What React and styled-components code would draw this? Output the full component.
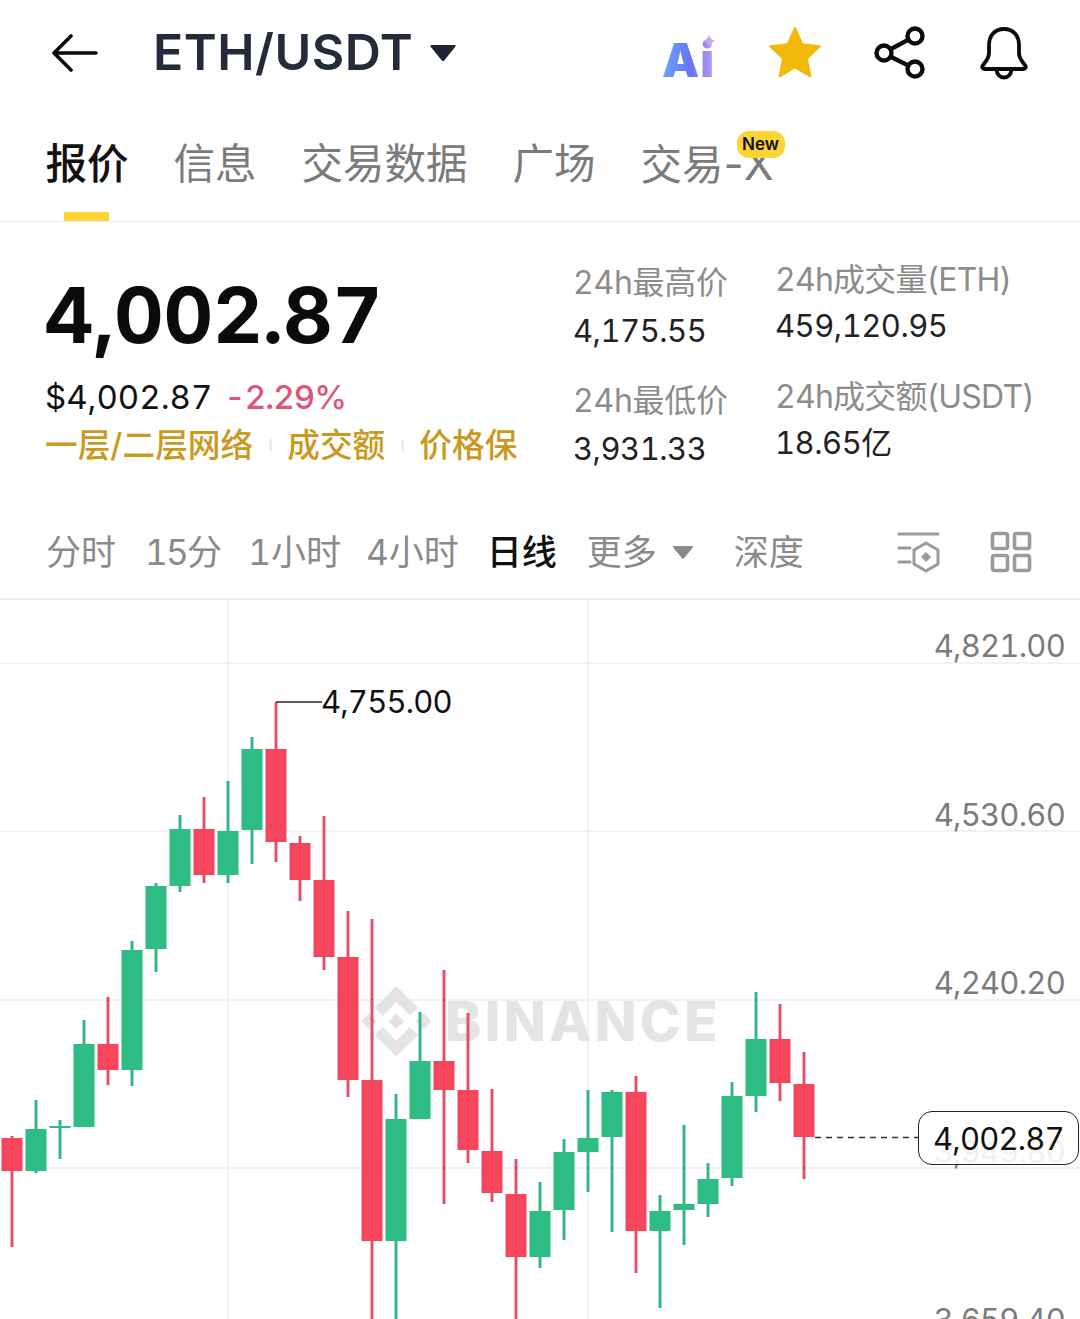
import React from "react";
import styled, { createGlobalStyle } from "styled-components";

const FONT = `Inter, "Noto Sans CJK SC", sans-serif`;

const GlobalStyle = createGlobalStyle`
  html, body {
    margin: 0;
    background: #fff;
  }
  body {
    font-family: ${FONT};
    font-variant-numeric: tabular-nums;
    overflow: hidden;
  }
`;

const RED = "#f6465d";
const GREEN = "#2ebd85";
const RED_WICK = "#e2506a";
const GREEN_WICK = "#3bb488";

// [type, body top, body bottom, wick high, wick low]
const CANDLES = [
  ["r", 1138, 1171, 1136, 1247],
  ["g", 1129, 1171, 1100, 1173],
  ["g", 1126, 1128, 1120, 1159],
  ["g", 1044, 1127, 1020, 1127],
  ["r", 1044, 1070, 997, 1085],
  ["g", 950, 1070, 941, 1086],
  ["g", 886, 949, 883, 972],
  ["g", 829, 886, 815, 892],
  ["r", 829, 875, 797, 883],
  ["g", 831, 875, 781, 883],
  ["g", 749, 830, 737, 864],
  ["r", 749, 842, 702, 862],
  ["r", 843, 880, 836, 901],
  ["r", 880, 957, 816, 970],
  ["r", 957, 1080, 911, 1097],
  ["r", 1080, 1241, 919, 1330],
  ["g", 1119, 1241, 1094, 1330],
  ["g", 1061, 1119, 1012, 1119],
  ["r", 1061, 1090, 970, 1204],
  ["r", 1090, 1150, 1013, 1163],
  ["r", 1151, 1193, 1089, 1202],
  ["r", 1194, 1257, 1159, 1330],
  ["g", 1211, 1257, 1182, 1268],
  ["g", 1152, 1210, 1139, 1240],
  ["g", 1138, 1152, 1090, 1192],
  ["g", 1092, 1137, 1090, 1232],
  ["r", 1092, 1231, 1076, 1273],
  ["g", 1211, 1231, 1195, 1308],
  ["g", 1204, 1210, 1125, 1245],
  ["g", 1179, 1204, 1163, 1217],
  ["g", 1096, 1178, 1082, 1186],
  ["g", 1039, 1096, 992, 1112],
  ["r", 1039, 1083, 1004, 1101],
  ["r", 1084, 1137, 1052, 1179],
];

const CHART_TOP = 600;
const AXIS = [
  { label: "4,821.00", y: 646 },
  { label: "4,530.60", y: 815 },
  { label: "4,240.20", y: 983 },
  { label: "3,949.80", y: 1152 },
  { label: "3,659.40", y: 1320 },
];

const Page = styled.div`
  width: 1080px;
  height: 1319px;
  background: #fff;
  overflow: hidden;
`;

const Header = styled.header`
  height: 106px;
  display: flex;
  align-items: center;
  padding: 0 50px 0 52px;
  box-sizing: border-box;
`;

const BackIcon = styled.svg`
  width: 46px;
  height: 40px;
  margin-right: 55px;
`;

const Title = styled.h1`
  margin: -3px 17px 0 0;
  font-size: 50px;
  line-height: 60px;
  font-weight: 600;
  color: #252b3b;
  letter-spacing: 0.5px;
`;

const Caret = styled.svg`
  width: ${(p) => p.$w}px;
  height: ${(p) => p.$h}px;
  margin-right: ${(p) => p.$mr || 0}px;
  display: block;
`;

const HeaderIcons = styled.div`
  margin-left: auto;
  display: flex;
  align-items: center;
  gap: 52px;
`;

const AiMark = styled.div`
  position: relative;
  width: 54px;
  height: 54px;
  display: flex;
  align-items: flex-end;
`;

const AiText = styled.span`
  font-size: 47px;
  line-height: 40px;
  font-weight: 900;
  letter-spacing: 1px;
  background: linear-gradient(90deg, #64a5f8 0%, #6b74f5 55%, #b79cf0 100%);
  -webkit-background-clip: text;
  background-clip: text;
  color: transparent;
`;

const Sparkle = styled.svg`
  position: absolute;
  right: 0;
  top: 8px;
  width: 14px;
  height: 14px;
`;

const Tabs = styled.nav`
  height: 116px;
  box-sizing: border-box;
  border-bottom: 1.5px solid #eeeeee;
  display: flex;
  gap: 45px;
  padding: 34px 0 0 45.5px;
`;

const Tab = styled.div`
  position: relative;
  height: 48px;
  font-size: 41.5px;
  line-height: 48px;
  font-weight: ${(p) => (p.$active ? 500 : 400)};
  color: ${(p) => (p.$active ? "#111" : "#7b7b7b")};

  ${(p) =>
    p.$active &&
    `&::after {
      content: "";
      position: absolute;
      left: 18.5px;
      bottom: -33px;
      width: 45px;
      height: 9px;
      background: #fcd535;
    }`}
`;

const XMark = styled.span`
  font-size: 44px;
  font-variant-numeric: normal;
`;

const NewBadge = styled.span`
  position: absolute;
  left: 96px;
  top: -9px;
  width: 48px;
  height: 27px;
  border-radius: 12px;
  background: #fcd535;
  color: #111;
  font-size: 17px;
  line-height: 27px;
  font-weight: 600;
  text-align: center;
`;

const Quote = styled.section`
  height: 288px;
  box-sizing: border-box;
  display: flex;
  padding-left: 46px;
`;

const QuoteMain = styled.div`
  width: 527px;
  padding-top: 48px;
`;

const LastPrice = styled.div`
  margin-left: -2px;
  font-size: 77px;
  line-height: 90px;
  font-weight: 700;
  letter-spacing: -0.25px;
  color: #0b0b0b;
`;

const SubRow = styled.div`
  margin-left: -1px;
  margin-top: 15px;
  display: flex;
  gap: 12px;
  font-size: 33px;
  line-height: 44px;
  font-weight: 400;
  color: #111;
`;

const Change = styled.span`
  letter-spacing: -0.9px;
  font-weight: 500;
  color: #dd5579;
`;

const TagRow = styled.div`
  margin-left: -1px;
  margin-top: 2px;
  display: flex;
  align-items: center;
  font-size: 32.7px;
  line-height: 48px;
  font-weight: 500;
  color: #c99a1e;
`;

const TagDivider = styled.i`
  display: block;
  width: 3px;
  height: 12px;
  margin: 0 15.5px;
  background: #eeeeee;
`;

const StatColumn = styled.div`
  width: ${(p) => p.$w}px;
  padding-top: ${(p) => p.$top}px;
  display: flex;
  flex-direction: column;
`;

const StatLabel = styled.div`
  height: 44px;
  font-size: 32px;
  line-height: 44px;
  letter-spacing: ${(p) => p.$spacing}px;
  color: #8c8c8c;
  white-space: nowrap;
`;

const StatValue = styled.div`
  height: 44px;
  margin-top: ${(p) => p.$gap}px;
  margin-bottom: ${(p) => p.$after}px;
  font-size: 31px;
  line-height: 44px;
  letter-spacing: -0.5px;
  color: #222;
  white-space: nowrap;
`;

const Toolbar = styled.div`
  height: 90px;
  box-sizing: border-box;
  border-bottom: 2px solid #f0f0f0;
  display: flex;
  align-items: center;
  padding: 0 48px 4px 46px;
  font-size: 35px;
`;

const Period = styled.span`
  margin-right: ${(p) => p.$mr}px;
  line-height: 44px;
  letter-spacing: ${(p) => p.$spacing || 0}px;
  font-weight: ${(p) => (p.$active ? 500 : 400)};
  color: ${(p) => (p.$active ? "#111" : "#8a8a8a")};
  white-space: nowrap;
`;

const ToolIcons = styled.div`
  margin-left: auto;
  display: flex;
  align-items: center;
  gap: 50px;
`;

const Chart = styled.div`
  position: relative;
  height: 719px;
  overflow: hidden;
`;

const ChartSvg = styled.svg`
  position: absolute;
  left: 0;
  top: 0;
  display: block;
`;

const AxisLabel = styled.span`
  position: absolute;
  right: 15px;
  top: ${(p) => p.$y - CHART_TOP - 22}px;
  font-size: 31px;
  line-height: 44px;
  letter-spacing: -0.75px;
  color: #7b7b7b;
`;

const HighLabel = styled.span`
  position: absolute;
  left: 321px;
  top: ${702 - CHART_TOP - 22}px;
  font-size: 31px;
  line-height: 44px;
  letter-spacing: -0.8px;
  color: #111;
`;

const LastPill = styled.div`
  position: absolute;
  left: 918px;
  top: ${1111 - CHART_TOP}px;
  width: 161px;
  height: 54px;
  box-sizing: border-box;
  border: 1.5px solid #222;
  border-radius: 14px;
  background: rgba(255, 255, 255, 0.88);
  font-size: 31px;
  line-height: 54px;
  letter-spacing: -0.8px;
  text-align: center;
  color: #111;
`;

const Watermark = styled.text`
  font-family: Inter, sans-serif;
  font-size: 55px;
  font-weight: 800;
  letter-spacing: 3.2px;
  fill: #e4e4e4;
`;

function Candle({ index, data }) {
  const [type, top, bottom, high, low] = data;
  const cx = 12 + index * 24;
  const y = (v) => v - CHART_TOP;
  return (
    <g>
      <rect
        x={cx - 1.5}
        y={y(high)}
        width="3"
        height={low - high}
        fill={type === "r" ? RED_WICK : GREEN_WICK}
      />
      <rect
        x={cx - 10.5}
        y={y(top)}
        width="21"
        height={bottom - top}
        fill={type === "r" ? RED : GREEN}
      />
    </g>
  );
}

function PriceChart() {
  return (
    <Chart>
      <ChartSvg width="1080" height="719" viewBox="0 0 1080 719">
        <g stroke="#eeeeee" strokeWidth="1.5">
          {[63, 231, 400, 568].map((y) => (
            <line key={y} x1="0" x2="1080" y1={y} y2={y} />
          ))}
          <line x1="228" x2="228" y1="0" y2="719" />
          <line x1="588" x2="588" y1="0" y2="719" />
        </g>
        <g transform="translate(361 386) scale(2.94)" fill="#e4e4e4">
          <path d="M16.624 13.9202l2.7175 2.7154-7.353 7.353-7.353-7.352 2.7175-2.7164 4.6355 4.6595 4.6356-4.6595zm4.6366-4.6366L24 12l-2.7154 2.7164L18.5682 12l2.6924-2.7164zm-9.272.001l2.7163 2.6914-2.7164 2.7174v-.001L9.2721 12l2.7164-2.7154zm-9.2722-.001L5.4088 12l-2.6914 2.6924L0 12l2.7164-2.7164zM11.9885.0115l7.353 7.329-2.7174 2.7154-4.6356-4.6356-4.6355 4.6595-2.7174-2.7154 7.353-7.353z" />
        </g>
        <Watermark x="445" y="441">BINANCE</Watermark>
        {CANDLES.map((c, i) => (
          <Candle key={i} index={i} data={c} />
        ))}
        <path d="M276 102H322" stroke="#222" strokeWidth="1.5" fill="none" />
        <path d="M815 537.5H918" stroke="#333" strokeWidth="1.5" strokeDasharray="6 5" fill="none" />
      </ChartSvg>
      {AXIS.map((a) => (
        <AxisLabel key={a.label} $y={a.y}>{a.label}</AxisLabel>
      ))}
      <HighLabel>4,755.00</HighLabel>
      <LastPill>4,002.87</LastPill>
    </Chart>
  );
}

export default function App() {
  return (
    <Page>
      <GlobalStyle />
      <Header>
        <BackIcon viewBox="0 0 46 40">
          <path d="M2 20H44M19 3L2 20L19 37" fill="none" stroke="#0b0b0b" strokeWidth="3.6" strokeLinecap="round" strokeLinejoin="round" />
        </BackIcon>
        <Title>ETH/USDT</Title>
        <Caret $w={26} $h={18} viewBox="0 0 26 18">
          <path d="M1.5 1H24.5C25.6 1 26 2 25.3 2.8L14.2 16.4C13.5 17.2 12.5 17.2 11.8 16.4L.7 2.8C0 2 .4 1 1.5 1Z" fill="#1e2433" />
        </Caret>
        <HeaderIcons>
          <AiMark>
            <AiText>Ai</AiText>
            <Sparkle viewBox="0 0 14 14">
              <path d="M7 0C7.6 4 9.5 6.2 14 7C9.5 7.8 7.6 10 7 14C6.4 10 4.5 7.8 0 7C4.5 6.2 6.4 4 7 0Z" fill="#c3a6e8" />
            </Sparkle>
          </AiMark>
          <svg width="54" height="54" viewBox="0 0 52 52">
            <path d="M26 2L33 17.6L50 19.6L37.4 31.2L40.8 48.4L26 39.8L11.2 48.4L14.6 31.2L2 19.6L19 17.6Z" fill="#f0b90b" stroke="#f0b90b" strokeWidth="2" strokeLinejoin="round" />
          </svg>
          <svg width="52" height="54" viewBox="0 0 52 54">
            <g fill="none" stroke="#0b0b0b" strokeWidth="4.4">
              <circle cx="10" cy="27" r="7.5" />
              <circle cx="41" cy="10" r="7.5" />
              <circle cx="41" cy="43" r="7.5" />
              <path d="M16.6 23.2L34.4 13.6M16.6 30.8L34.4 39.4" />
            </g>
          </svg>
          <svg width="52" height="54" viewBox="0 0 52 54">
            <path d="M26 3C15.5 3 11 11 11 19V27C11 33 7 36 4.5 40C3.8 41.6 4.6 43 6.5 43H45.5C47.4 43 48.2 41.6 47.5 40C45 36 41 33 41 27V19C41 11 36.5 3 26 3Z" fill="none" stroke="#0b0b0b" strokeWidth="3.8" strokeLinejoin="round" />
            <path d="M18.5 43.5C19 48.5 22 51.5 26 51.5C30 51.5 33 48.5 33.5 43.5" fill="none" stroke="#0b0b0b" strokeWidth="3.8" />
          </svg>
        </HeaderIcons>
      </Header>

      <Tabs>
        <Tab $active>报价</Tab>
        <Tab>信息</Tab>
        <Tab>交易数据</Tab>
        <Tab>广场</Tab>
        <Tab>
          交易<XMark>-X</XMark>
          <NewBadge>New</NewBadge>
        </Tab>
      </Tabs>

      <Quote>
        <QuoteMain>
          <LastPrice>4,002.87</LastPrice>
          <SubRow>
            <span>$4,002.87</span>
            <Change>-2.29%</Change>
          </SubRow>
          <TagRow>
            <span>一层/二层网络</span>
            <TagDivider />
            <span>成交额</span>
            <TagDivider />
            <span>价格保</span>
          </TagRow>
        </QuoteMain>
        <StatColumn $w={202} $top={39}>
          <StatLabel $spacing={-0.3}>24h最高价</StatLabel>
          <StatValue $gap={4} $after={26}>4,175.55</StatValue>
          <StatLabel $spacing={-0.3}>24h最低价</StatLabel>
          <StatValue $gap={4} $after={0}>3,931.33</StatValue>
        </StatColumn>
        <StatColumn $w={280} $top={36}>
          <StatLabel $spacing={-0.8}>24h成交量(ETH)</StatLabel>
          <StatValue $gap={2} $after={27}>459,120.95</StatValue>
          <StatLabel $spacing={-0.8}>24h成交额(USDT)</StatLabel>
          <StatValue $gap={2} $after={0}>18.65亿</StatValue>
        </StatColumn>
      </Quote>

      <Toolbar>
        <Period $mr={29}>分时</Period>
        <Period $mr={28} $spacing={-1.7}>15分</Period>
        <Period $mr={25}>1小时</Period>
        <Period $mr={28}>4小时</Period>
        <Period $mr={30} $active>日线</Period>
        <Period $mr={16}>更多</Period>
        <Caret $w={20} $h={13} $mr={41} viewBox="0 0 20 13">
          <path d="M1 0H19C20 0 20.3 1 19.7 1.7L11 12.2C10.4 12.9 9.6 12.9 9 12.2L.3 1.7C-.3 1 0 0 1 0Z" fill="#8a8a8a" />
        </Caret>
        <Period $mr={0}>深度</Period>
        <ToolIcons>
          <svg width="43" height="42" viewBox="0 0 43 42">
            <g fill="none" stroke="#9a9a9a" strokeWidth="3" strokeLinecap="round" strokeLinejoin="round">
              <path d="M2 3H41M2 17H13M2 31H13" />
              <path d="M29 12L41 19V33L29 40L17 33V19Z" />
            </g>
            <path d="M29 21L34 26L29 31L24 26Z" fill="#9a9a9a" />
          </svg>
          <svg width="42" height="42" viewBox="0 0 42 42">
            <g fill="none" stroke="#9a9a9a" strokeWidth="3.6">
              <rect x="2.5" y="2.5" width="15" height="15" rx="2" />
              <rect x="24.5" y="2.5" width="15" height="15" rx="2" />
              <rect x="2.5" y="24.5" width="15" height="15" rx="2" />
              <rect x="24.5" y="24.5" width="15" height="15" rx="2" />
            </g>
          </svg>
        </ToolIcons>
      </Toolbar>

      <PriceChart />
    </Page>
  );
}
